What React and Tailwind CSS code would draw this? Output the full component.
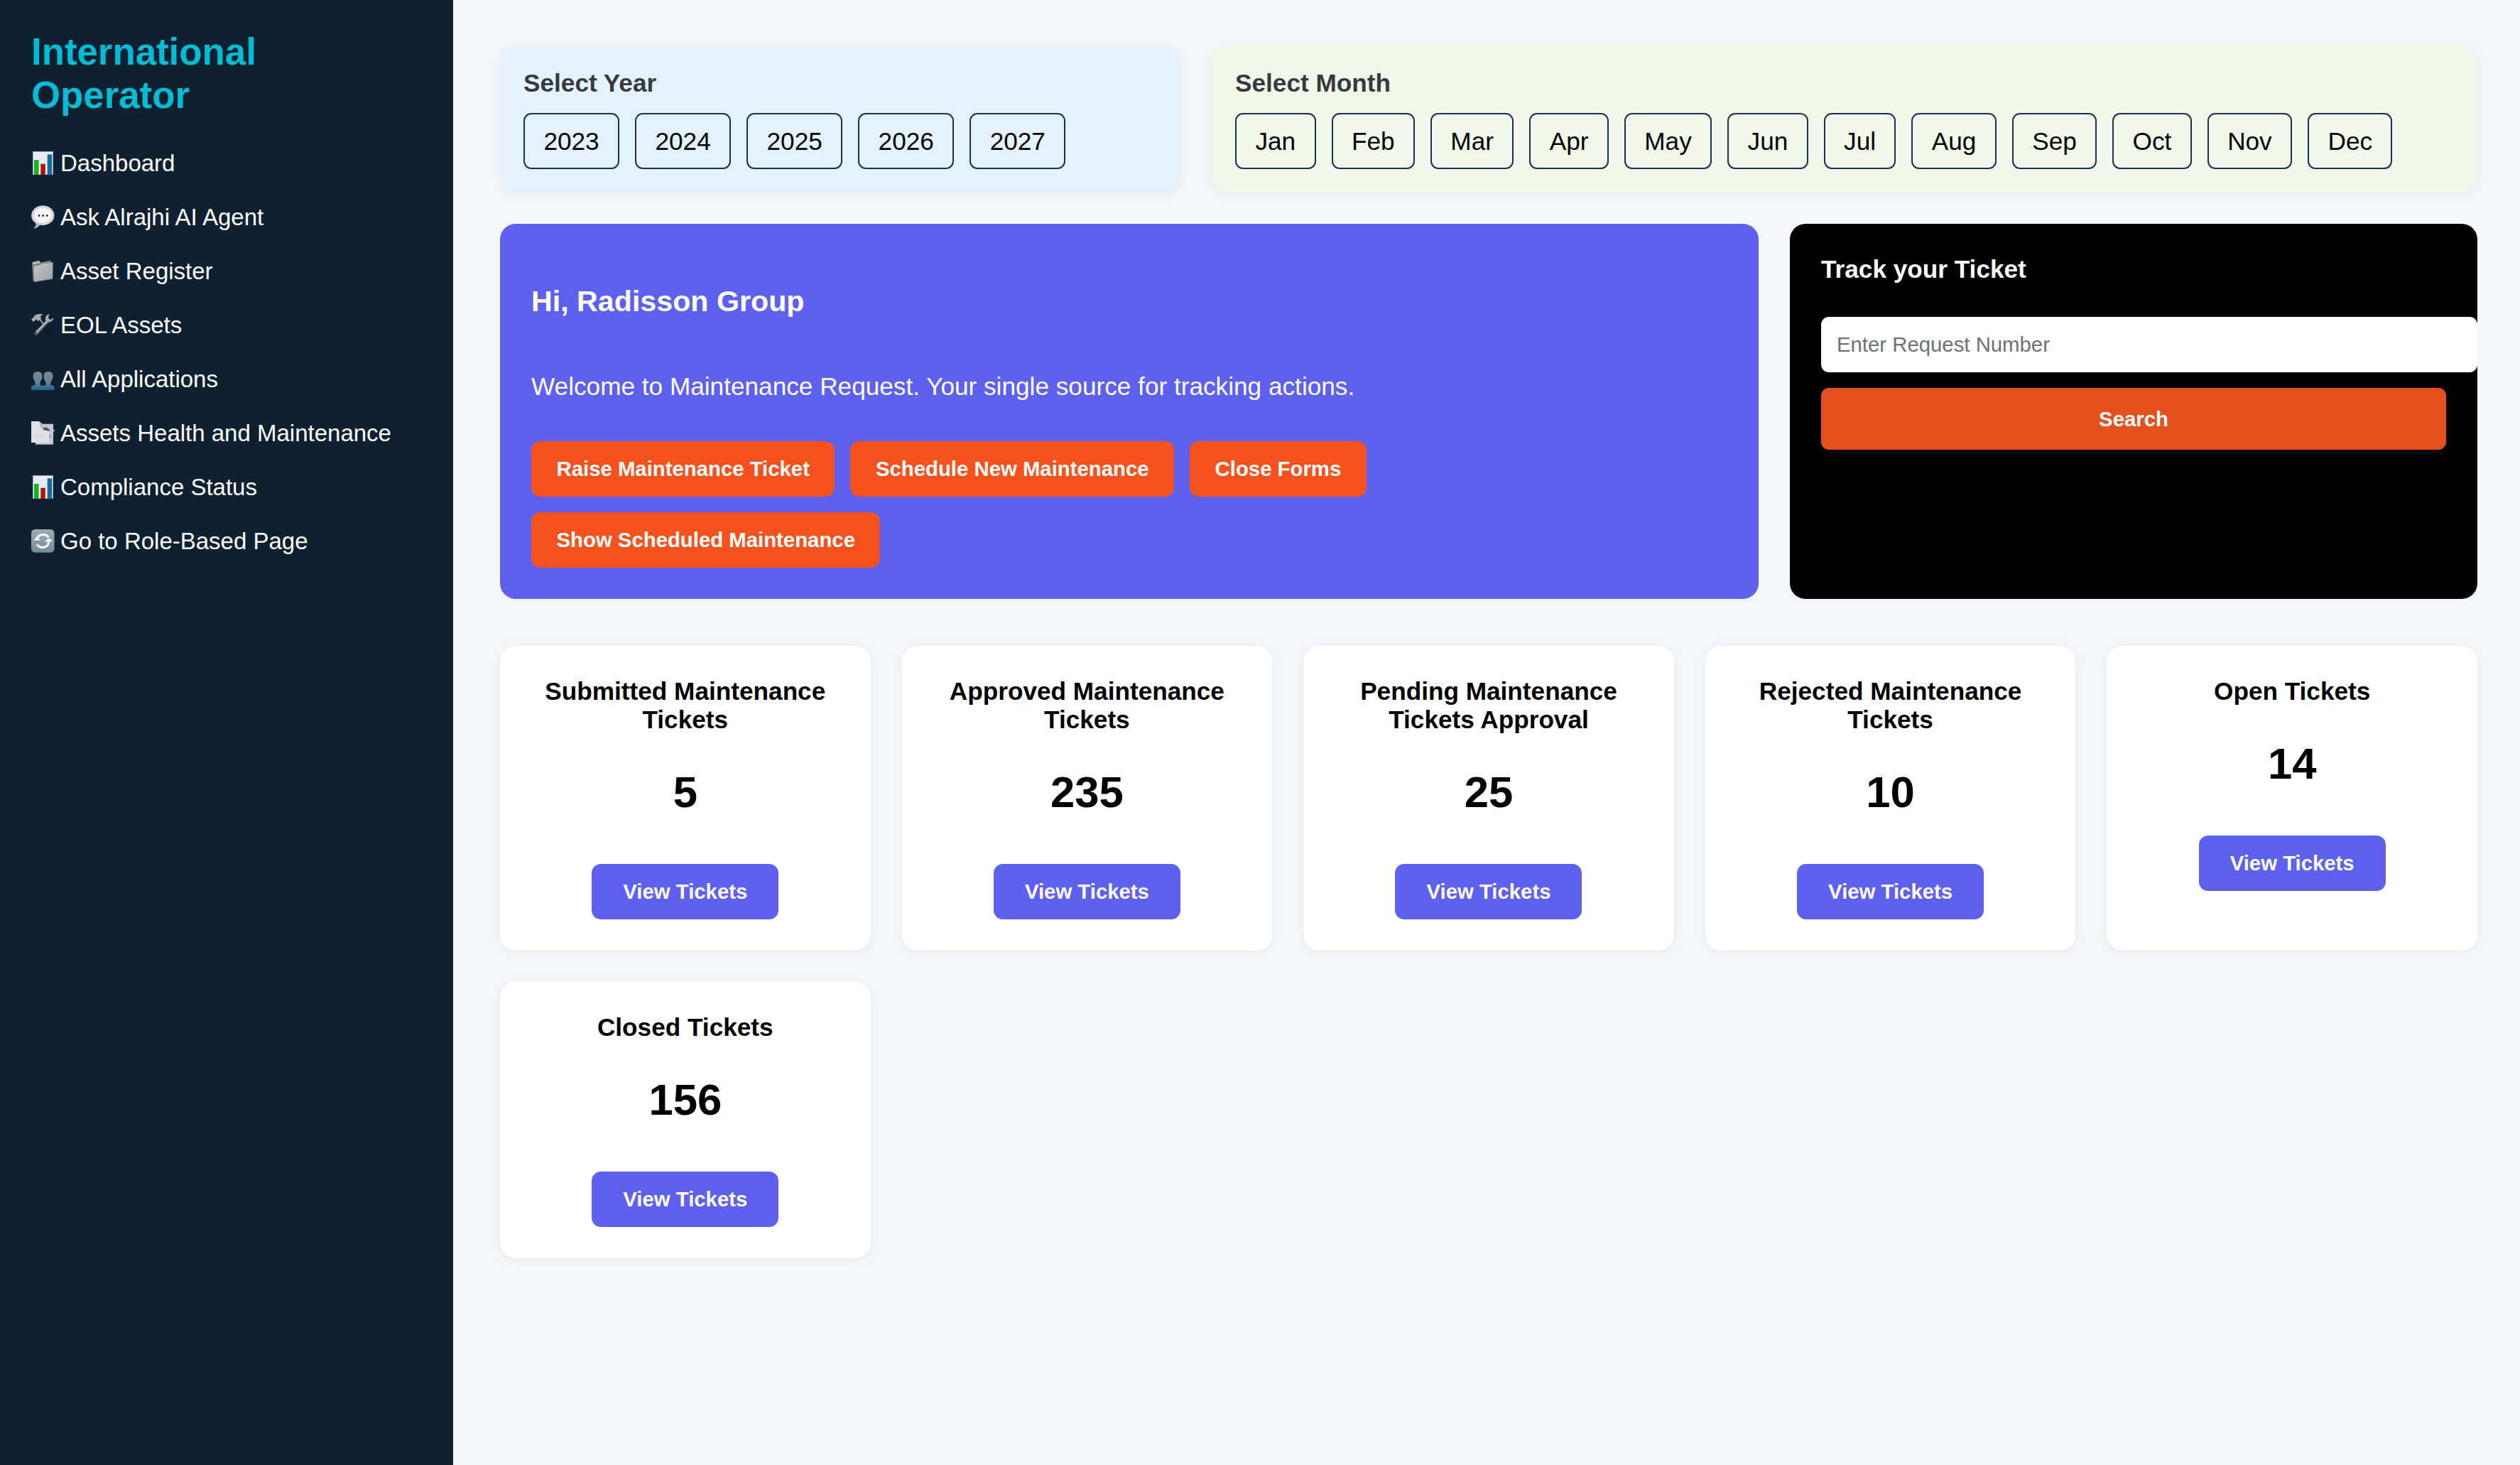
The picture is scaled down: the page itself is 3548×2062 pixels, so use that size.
import React, { useState } from 'react'

const years = ['2023', '2024', '2025', '2026', '2027']
const months = ['Jan', 'Feb', 'Mar', 'Apr', 'May', 'Jun', 'Jul', 'Aug', 'Sep', 'Oct', 'Nov', 'Dec']

const cards = [
  { id: 'submitted', title: 'Submitted Maintenance Tickets', count: 5 },
  { id: 'approved', title: 'Approved Maintenance Tickets', count: 235 },
  { id: 'pending', title: 'Pending Maintenance Tickets Approval', count: 25 },
  { id: 'rejected', title: 'Rejected Maintenance Tickets', count: 10 },
  { id: 'open', title: 'Open Tickets', count: 14 },
  { id: 'closed', title: 'Closed Tickets', count: 156 },
]

const actions = ['Raise Maintenance Ticket', 'Schedule New Maintenance', 'Close Forms', 'Show Scheduled Maintenance']

// Sidebar icons, all drawn on a 33x33 box
function ChartIcon() {
  return (
    <svg className="h-[33px] w-[33px]" viewBox="0 0 33 33">
      <rect x="2.500" y="0.500" width="28" height="32.500" fill="#e4ebf5" stroke="#a5acb6" />
      <rect x="4" y="12" width="6.500" height="21" fill="#12b41c" />
      <rect x="13.300" y="17.700" width="6.500" height="15.300" fill="#b80f08" />
      <rect x="22.700" y="4.300" width="6.500" height="28.700" fill="#146c9c" />
    </svg>
  )
}

function ChatIcon() {
  return (
    <svg className="h-[33px] w-[33px]" viewBox="0 0 33 33">
      <defs>
        <radialGradient id="bubble">
          <stop offset="0.6" stopColor="#fbfbfe" />
          <stop offset="1" stopColor="#c4c6cc" />
        </radialGradient>
      </defs>
      <path d="M5 24L7 27L3.500 32.700C8 32 11 30 12.500 27Z" fill="#b4b7bc" />
      <ellipse cx="16.300" cy="14.200" rx="16.200" ry="14" fill="url(#bubble)" />
      <circle cx="11" cy="14.500" r="1.400" fill="#1c2430" />
      <circle cx="16.700" cy="14.500" r="1.400" fill="#1c2430" />
      <circle cx="22.300" cy="14.500" r="1.400" fill="#1c2430" />
    </svg>
  )
}

function FolderIcon() {
  return (
    <svg className="h-[33px] w-[33px]" viewBox="0 0 33 33">
      <defs>
        <linearGradient id="folder" x1="0" y1="0" x2="1" y2="1">
          <stop offset="0" stopColor="#c3c6c8" />
          <stop offset="1" stopColor="#9da1a4" />
        </linearGradient>
      </defs>
      <path d="M1 5L11 2.300L13.500 4.500L27.500 1.500L28.500 5L28 27L2.500 30.500Z" fill="#777c80" />
      <path d="M2 3.800L11 2L13 4.500L12 5.500L2 7.500Z" fill="#b3b7ba" />
      <path d="M3 9.500L13 7.500L15.500 5.500L30.500 4.500L30 27.500L4 31.700Z" fill="url(#folder)" stroke="#74797d" strokeWidth="0.600" />
    </svg>
  )
}

function ToolsIcon() {
  return (
    <svg className="h-[33px] w-[33px]" viewBox="0 0 33 33">
      <path d="M12 8L18 17" stroke="#9c9fa1" strokeWidth="2" />
      <path d="M17 16L28 31" stroke="#08090c" strokeWidth="3.200" />
      <path d="M18 17L28 31" stroke="#4d5053" strokeWidth="0.700" />
      <path d="M23 11L6.500 28.500" stroke="#84888b" strokeWidth="4.400" strokeLinecap="round" />
      <path d="M22 11L7 26.500" stroke="#c4c7c9" strokeWidth="1.400" />
      <circle cx="6.500" cy="28.300" r="1.200" fill="#1b2630" />
      <path d="M0 8.500L3 6C5 1.500 9 0.300 17 1.500L13 4L14 8L9.500 11L7 8.500L3 12Z" fill="#a6aaad" />
      <path d="M25.500 1C20.500 2 18.800 6 20.500 10.500C23 14 30 13 31.800 6L27 9L23.800 6.500Z" fill="#a6aaad" />
    </svg>
  )
}

function PeopleIcon() {
  return (
    <svg className="h-[33px] w-[33px]" viewBox="0 0 33 33">
      <defs>
        <linearGradient id="people" x1="0" y1="0" x2="0" y2="1">
          <stop offset="0" stopColor="#7c8795" />
          <stop offset="0.6" stopColor="#64809a" />
          <stop offset="1" stopColor="#1b6689" />
        </linearGradient>
      </defs>
      <path d="M0 32V28Q0 26 5.500 25V20.500Q2.500 17 2.500 12Q3 6 9 6Q15.500 6 15.500 12Q15.500 17 12.500 20.500V25L16.500 26L20.500 25V20.500Q17.500 17 17.500 12Q17.500 6 24 6Q30.500 6 30.500 12Q30.500 17 27.500 20.500V25Q32.500 26 32.500 28V32Z" fill="url(#people)" />
    </svg>
  )
}

function PagesIcon() {
  return (
    <svg className="h-[33px] w-[33px]" viewBox="0 0 33 33">
      <path d="M6 3.700H31V32.700H6Z" fill="#c6c8ce" />
      <path d="M15 9L22 8.500L26 12L25 15L18 14Z" fill="#52585d" />
      <path d="M0 0H11L16 4L17 12L25.500 14V30H0Z" fill="#dfe0e5" />
      <path d="M11 0L16 4L17 12L13 8Z" fill="#b5b8bd" />
      <path d="M3 19H22M3 22H20" stroke="#dcc9cd" strokeWidth="0.800" />
      <path d="M26.500 18V24M32 11V15" stroke="#8389f0" strokeWidth="1.500" />
    </svg>
  )
}

function RefreshIcon() {
  return (
    <svg className="h-[33px] w-[33px]" viewBox="0 0 33 33">
      <defs>
        <linearGradient id="refresh" x1="0" y1="0" x2="0" y2="1">
          <stop offset="0" stopColor="#a2a8b8" />
          <stop offset="1" stopColor="#718d9d" />
        </linearGradient>
      </defs>
      <rect width="32.500" height="32.700" rx="5.500" fill="url(#refresh)" />
      <path d="M8 15C8.500 7 19 5 24.500 11.500M24.500 18C24 26 13.500 28 8 21.500" fill="none" stroke="#fff" strokeWidth="3" />
      <path d="M3.500 15.500L8 10L13 15.500ZM19 17.500L24 12.500L29 15L28.500 17.500Z" fill="#fff" />
    </svg>
  )
}

const menu = [
  { label: 'Dashboard', Icon: ChartIcon },
  { label: 'Ask Alrajhi AI Agent', Icon: ChatIcon },
  { label: 'Asset Register', Icon: FolderIcon },
  { label: 'EOL Assets', Icon: ToolsIcon },
  { label: 'All Applications', Icon: PeopleIcon },
  { label: 'Assets Health and Maintenance', Icon: PagesIcon },
  { label: 'Compliance Status', Icon: ChartIcon },
  { label: 'Go to Role-Based Page', Icon: RefreshIcon },
]

function Sidebar() {
  return (
    <aside className="w-[638px] shrink-0 bg-[#0f2030] px-11 pt-[42px] text-white">
      <h2 className="text-[52.800px] leading-[61px] font-bold text-[#00bcd4]">International<br />Operator</h2>
      <ul className="mt-[27px]">
        {menu.map(({ label, Icon }) => (
          <li key={label} className="flex h-[76px] items-center">
            <a href="#" className="flex items-center gap-[8px] text-[33px] leading-[37px] whitespace-nowrap">
              <Icon />
              <span>{label}</span>
            </a>
          </li>
        ))}
      </ul>
    </aside>
  )
}

function Picker({ title, items, className }) {
  const [selected, setSelected] = useState(null)
  return (
    <section className={`h-[207px] rounded-[22px] px-[33px] pt-[33px] shadow-[0_2px_14px_rgba(0,0,0,0.06)] ${className}`}>
      <h4 className="text-[35.200px] leading-[40px] font-bold text-[#343a40]">{title}</h4>
      <div className="mt-[22px] flex gap-[22px]">
        {items.map((item) => (
          <button
            key={item}
            onClick={() => setSelected(item)}
            aria-pressed={selected === item}
            className="h-[79px] rounded-[11px] border-2 border-[#1b2f50] px-[26.400px] text-[35.200px] leading-[40px]"
          >
            {item}
          </button>
        ))}
      </div>
    </section>
  )
}

function TicketCard({ title, count }) {
  return (
    <article className="flex flex-col items-center rounded-[22px] bg-white px-11 py-11 text-center shadow-[0_2px_14px_rgba(0,0,0,0.06)]">
      <h4 className="text-[35.200px] leading-[40px] font-bold">{title}</h4>
      <p className="mt-[47px] text-[61.600px] leading-[70px] font-bold">{count}</p>
      <button className="mt-[66px] h-[78px] rounded-[13px] bg-[#5e60ef] px-11 text-[29.330px] font-bold text-white">View Tickets</button>
    </article>
  )
}

export default function App() {
  const [request, setRequest] = useState('')

  return (
    <div className="flex h-[2062px] w-[3548px] overflow-hidden bg-[#f4f6fa] font-['Liberation_Sans',Arial,sans-serif] text-black">
      <Sidebar />

      <main className="min-w-0 flex-1 pt-[64px] pr-[60px] pl-[66px]">
        {/* Filters */}
        <div className="flex gap-11">
          <Picker title="Select Year" items={years} className="w-[958px] bg-[#e3f2fd]" />
          <Picker title="Select Month" items={months} className="flex-1 bg-[#f1f8e9]" />
        </div>

        {/* Welcome + tracking */}
        <div className="mt-11 flex h-[528px] gap-11">
          <section className="w-[1772px] shrink-0 rounded-[22px] bg-[#5e60ef] px-11 pt-[85px] text-white">
            <h3 className="text-[41.200px] leading-[48px] font-bold">Hi, Radisson Group</h3>
            <p className="mt-[76px] text-[35.200px] leading-[40px]">Welcome to Maintenance Request. Your single source for tracking actions.</p>
            <div className="mt-[57px] flex w-[1300px] flex-wrap gap-[22px]">
              {actions.map((a) => (
                <button key={a} className="h-[78px] rounded-[13px] bg-[#f7521e] px-[35.500px] text-[29.330px] font-bold">{a}</button>
              ))}
            </div>
          </section>

          <section className="min-w-0 flex-1 rounded-[22px] bg-black px-11 pt-11 text-white">
            <h4 className="text-[35.200px] leading-[40px] font-bold">Track your Ticket</h4>
            {/* input runs through the right padding up to the panel edge */}
            <input
              value={request}
              onChange={(e) => setRequest(e.target.value)}
              placeholder="Enter Request Number"
              className="mt-[47px] block h-[78px] w-[924px] rounded-[11px] bg-white px-[22px] text-[29.330px] text-black placeholder-[#6b7278]"
            />
            <button className="mt-[22px] block h-[87px] w-full rounded-[11px] bg-[#e5511c] text-[29.330px] font-bold">Search</button>
          </section>
        </div>

        {/* Ticket counters */}
        <div className="mt-[66px] grid grid-cols-5 gap-11">
          {cards.map((c) => (
            <TicketCard key={c.id} title={c.title} count={c.count} />
          ))}
        </div>
      </main>
    </div>
  )
}
